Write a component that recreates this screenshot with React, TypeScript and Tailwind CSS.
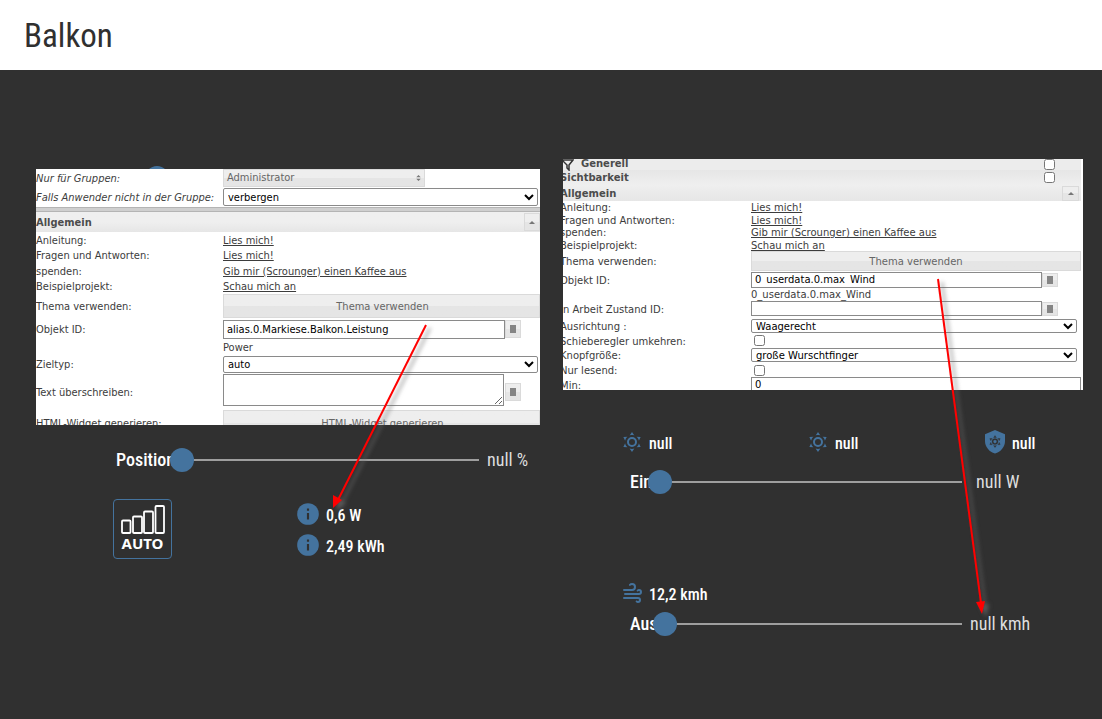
import { ReactNode } from "react"
import clsx from "clsx"

const SUN =
  "M12,7A5,5 0 0,1 17,12A5,5 0 0,1 12,17A5,5 0 0,1 7,12A5,5 0 0,1 12,7M12,9A3,3 0 0,0 9,12A3,3 0 0,0 12,15A3,3 0 0,0 15,12A3,3 0 0,0 12,9M12,2L14.39,5.42C13.65,5.15 12.84,5 12,5C11.16,5 10.35,5.15 9.61,5.42L12,2M3.34,7L7.5,6.65C6.9,7.16 6.36,7.78 5.94,8.5C5.5,9.24 5.25,10 5.11,10.79L3.34,7M3.36,17L5.12,13.23C5.26,14 5.53,14.78 5.95,15.5C6.37,16.24 6.91,16.86 7.5,17.37L3.36,17M20.65,7L18.88,10.79C18.74,10 18.47,9.23 18.05,8.5C17.63,7.78 17.1,7.15 16.5,6.64L20.65,7M20.64,17L16.5,17.36C17.09,16.85 17.62,16.22 18.04,15.5C18.46,14.77 18.73,14 18.87,13.21L20.64,17M12,22L9.59,18.56C10.33,18.83 11.14,19 12,19C12.82,19 13.63,18.83 14.37,18.56L12,22Z"
const WIND =
  "M4,10A1,1 0 0,1 3,9A1,1 0 0,1 4,8H12A2,2 0 0,0 14,6A2,2 0 0,0 12,4C11.45,4 10.95,4.22 10.59,4.59C10.2,5 9.56,5 9.17,4.59C8.78,4.2 8.78,3.56 9.17,3.17C9.9,2.45 10.9,2 12,2A4,4 0 0,1 16,6A4,4 0 0,1 12,10H4M19,12A1,1 0 0,0 20,11A1,1 0 0,0 19,10C18.72,10 18.47,10.11 18.29,10.29C17.9,10.68 17.27,10.68 16.88,10.29C16.5,9.9 16.5,9.27 16.88,8.88C17.42,8.34 18.17,8 19,8A3,3 0 0,1 22,11A3,3 0 0,1 19,14H5A1,1 0 0,1 4,13A1,1 0 0,1 5,12H19M18,18H4A1,1 0 0,1 3,17A1,1 0 0,1 4,16H18A3,3 0 0,1 21,19A3,3 0 0,1 18,22C17.17,22 16.42,21.66 15.88,21.12C15.5,20.73 15.5,20.1 15.88,19.71C16.27,19.32 16.9,19.32 17.29,19.71C17.47,19.89 17.72,20 18,20A1,1 0 0,0 19,19A1,1 0 0,0 18,18Z"

const GREY = "border border-[#dadada] bg-linear-to-b from-[#eeeeee] from-50% to-[#e5e5e5] to-50%"
const FIELD = "border border-[#8a8a8a] bg-white text-black"

const SunIcon = () => (
  <svg viewBox="0 0 24 24" className="size-6 fill-[#44739e]">
    <path d={SUN} />
  </svg>
)

const WindIcon = () => (
  <svg viewBox="0 0 24 24" className="size-6 fill-[#44739e]">
    <path d={WIND} />
  </svg>
)

const ShieldSunIcon = () => (
  <svg viewBox="0 0 24 26" className="h-[26px] w-6">
    <path d="M12 1 2 5.300v6.700c0 5.800 4.200 11 10 12.600 5.800-1.600 10-6.800 10-12.600V5.300z" fill="#44739e" />
    <g transform="translate(4.800 5.400) scale(.6)" fill="#303030" stroke="#303030" strokeWidth=".5">
      <path d={SUN} />
    </g>
  </svg>
)

const InfoIcon = () => (
  <svg viewBox="0 0 24 24" className="size-[26px]">
    <circle cx="12" cy="12" r="10" fill="#44739e" />
    <path d="M11 7h2v2h-2zM11 11h2v6h-2z" fill="#303030" />
  </svg>
)

const Row = ({
  label,
  id,
  height,
  italic,
  children,
}: {
  label?: string
  id?: string
  height: string
  italic?: boolean
  children: ReactNode
}) => (
  <div className={clsx("flex items-center", height)}>
    <label htmlFor={id} className={clsx("w-[187px] shrink-0 pt-0.5 whitespace-nowrap", italic && "italic")}>
      {label}
    </label>
    <div className="flex min-w-0 flex-1 items-center">{children}</div>
  </div>
)

const Links = ({ height }: { height: string }) => {
  const links = [
    ["Anleitung:", "Lies mich!"],
    ["Fragen und Antworten:", "Lies mich!"],
    ["spenden:", "Gib mir (Scrounger) einen Kaffee aus"],
    ["Beispielprojekt:", "Schau mich an"],
  ]
  return (
    <div className={clsx("grid grid-rows-4", height)}>
      {links.map(([label, text]) => (
        <Row key={label} label={label} height="h-auto">
          <a href="#" className="pt-0.5 underline">
            {text}
          </a>
        </Row>
      ))}
    </div>
  )
}

const PickButton = ({ height }: { height: string }) => (
  <button aria-label="Auswählen" className={clsx("flex w-4 shrink-0 items-center justify-center", GREY, height)}>
    <span className="h-2 w-1.5 bg-[#858585]" />
  </button>
)

const CollapseButton = ({ size }: { size: string }) => (
  <button aria-label="Einklappen" className={clsx("flex items-center justify-center", GREY, size)}>
    <svg viewBox="0 0 6 3" className="h-[3px] w-1.5 fill-[#777]">
      <path d="M0 3 3 0l3 3z" />
    </svg>
  </button>
)

const GroupPanel = () => (
  <section className="relative h-64 overflow-hidden bg-white font-['DejaVu_Sans_Condensed','DejaVu_Sans',sans-serif] text-[11px] leading-[14px] text-[#3c3c3c]">
    <Row label="Nur für Gruppen:" id="groups" height="h-[18px]" italic>
      <button id="groups" className={clsx("flex h-[18px] w-[202px] items-center justify-between px-[3px] text-[#666]", GREY)}>
        Administrator
        <svg viewBox="0 0 6 8" className="h-1.5 w-[5px] fill-[#777]">
          <path d="M0 3 3 0l3 3zM0 5h6L3 8z" />
        </svg>
      </button>
    </Row>
    <Row label="Falls Anwender nicht in der Gruppe:" id="hide" height="h-5" italic>
      <select id="hide" className={clsx("mr-0.5 h-[18px] w-full rounded-xs", FIELD)}>
        <option>verbergen</option>
      </select>
    </Row>
    <div className="h-[5px] border-y border-[#b4b4b4] bg-[#cfcfcf]" />
    <div className="flex h-5 items-center justify-between bg-linear-to-b from-[#efefef] from-50% to-[#e6e6e6]">
      <h2 className="pt-0.5 font-bold text-[#4c4c4c]">Allgemein</h2>
      <CollapseButton size="h-[18px] w-4" />
    </div>
    <Links height="h-[62px]" />
    <Row label="Thema verwenden:" id="theme" height="h-6">
      <button id="theme" className={clsx("h-6 w-full pt-0.5 pl-0.5 text-[#666]", GREY)}>
        Thema verwenden
      </button>
    </Row>
    <Row label="Objekt ID:" id="object" height="h-[22px]">
      <input id="object" defaultValue="alias.0.Markiese.Balkon.Leistung" className={clsx("h-[19px] w-[282px] px-[3px]", FIELD)} />
      <PickButton height="h-[18px]" />
    </Row>
    <Row height="h-[15px]">Power</Row>
    <Row label="Zieltyp:" id="target" height="h-[18px]">
      <select id="target" className={clsx("mr-0.5 h-[17px] w-full rounded-xs", FIELD)}>
        <option>auto</option>
      </select>
    </Row>
    <Row label="Text überschreiben:" id="override" height="h-[37px]">
      <textarea id="override" className={clsx("mr-px mb-1 h-8 w-[281px]", FIELD)} />
      <PickButton height="h-[18px]" />
    </Row>
    <Row label="HTML-Widget generieren:" id="html" height="h-[26px]">
      <button id="html" className={clsx("h-[26px] w-full pt-0.5 pl-0.5 text-[#666]", GREY)}>
        HTML-Widget generieren
      </button>
    </Row>
  </section>
)

const WindPanel = () => (
  <section className="flex h-[231px] overflow-hidden bg-white font-['DejaVu_Sans',sans-serif] text-[10px] leading-3 text-[#3c3c3c]">
    <div className="-ml-[3px] min-w-0 flex-1 pr-0.5 [&_label]:w-[191px]">
      <div className="flex h-[11px] items-center bg-[#ececec] font-bold text-[#4c4c4c]">
        <svg viewBox="0 0 12 12" className="h-3 w-3.5 fill-none stroke-[#333] stroke-[1.500]">
          <path d="M1 1h11L8 6v5L6 9V6z" />
        </svg>
        <label htmlFor="general" className="ml-[7px] pb-px">
          Generell
        </label>
        <input id="general" type="checkbox" className="mr-[26px] ml-auto size-[11px] rounded-xs" />
      </div>
      <div className="flex h-[15px] items-center bg-linear-to-b from-[#e6e6e6] to-[#efefef] font-bold text-[#4c4c4c]">
        <label htmlFor="visible">Sichtbarkeit</label>
        <input id="visible" type="checkbox" className="mr-[26px] ml-auto size-[11px] rounded-xs" />
      </div>
      <div className="flex h-4 items-center justify-between bg-linear-to-b from-[#efefef] to-[#e6e6e6] pr-0.5">
        <h2 className="pt-0.5 font-bold text-[#4c4c4c]">Allgemein</h2>
        <CollapseButton size="h-[15px] w-[17px]" />
      </div>
      <Links height="h-[50px]" />
      <Row label="Thema verwenden:" id="theme2" height="h-5">
        <button id="theme2" className={clsx("h-5 w-full pt-0.5 text-[#666]", GREY)}>
          Thema verwenden
        </button>
      </Row>
      <Row label="Objekt ID:" id="object2" height="h-[17px]">
        <input
          id="object2"
          defaultValue="0_userdata.0.max_Wind"
          className={clsx("h-4 w-[291px] px-[3px] leading-[14px]", FIELD)}
        />
        <PickButton height="h-[14px]" />
      </Row>
      <Row height="h-3">
        <span className="pt-px">0_userdata.0.max_Wind</span>
      </Row>
      <Row label="In Arbeit Zustand ID:" id="working" height="h-[17px]">
        <input id="working" className={clsx("h-[15px] w-[291px] px-[3px]", FIELD)} />
        <PickButton height="h-[14px]" />
      </Row>
      <Row label="Ausrichtung :" id="orient" height="h-[17px]">
        <select id="orient" className={clsx("mr-1 h-3.5 w-full rounded-xs", FIELD)}>
          <option>Waagerecht</option>
        </select>
      </Row>
      <Row label="Schieberegler umkehren:" id="invert" height="h-[13px]">
        <input id="invert" type="checkbox" className="ml-[3px] size-[11px]" />
      </Row>
      <Row label="Knopfgröße:" id="knob" height="h-4">
        <select id="knob" className={clsx("mr-1 h-3.5 w-full rounded-xs", FIELD)}>
          <option>große Wurschtfinger</option>
        </select>
      </Row>
      <Row label="Nur lesend:" id="readonly" height="h-[14px]">
        <input id="readonly" type="checkbox" className="ml-[3px] size-[11px]" />
      </Row>
      <Row label="Min:" id="min" height="h-[15px]">
        <input id="min" defaultValue="0" className={clsx("h-[15px] w-full px-[3px]", FIELD)} />
      </Row>
    </div>
  </section>
)

const Slider = ({
  label,
  labelWidth,
  value,
  valueClass,
}: {
  label: string
  labelWidth: string
  value: string
  valueClass: string
}) => (
  <div className="flex h-6 items-center text-lg text-white">
    <label htmlFor={label} className={clsx("shrink-0 whitespace-nowrap font-medium", labelWidth)}>
      {label}
    </label>
    <input
      id={label}
      type="range"
      defaultValue={0}
      className="relative h-6 min-w-0 flex-1 appearance-none bg-transparent [&::-webkit-slider-runnable-track]:h-0.5 [&::-webkit-slider-runnable-track]:bg-[#9e9e9e] [&::-webkit-slider-thumb]:-mt-[11px] [&::-webkit-slider-thumb]:size-6 [&::-webkit-slider-thumb]:appearance-none [&::-webkit-slider-thumb]:rounded-full [&::-webkit-slider-thumb]:bg-[#44739e]"
    />
    <output htmlFor={label} className={clsx("shrink-0 whitespace-nowrap text-[#dedede]", valueClass)}>
      {value}
    </output>
  </div>
)

const Reading = ({ icon, children }: { icon: ReactNode; children: ReactNode }) => (
  <div className="flex h-[26px] items-center gap-[5px] whitespace-nowrap text-base font-medium text-white">
    {icon}
    <span className="pt-[3px]">{children}</span>
  </div>
)

const Arrows = () => (
  <svg className="pointer-events-none absolute top-0 left-0 h-[649px] w-[1102px] drop-shadow-[4px_3px_2px_rgba(110,110,110,0.7)]">
    <g stroke="#f00" strokeWidth="2" fill="#f00">
      <path d="M426 255 338 430" />
      <path d="M333 438v-13l9 5z" stroke="none" />
      <path d="M938 209 981 533" />
      <path d="m982 544-6-12 9-1z" stroke="none" />
    </g>
  </svg>
)

export default function App() {
  return (
    <div className="flex min-h-screen flex-col bg-[#303030] font-['Roboto_Condensed',Roboto,sans-serif]">
      <header className="flex h-[70px] items-center bg-white px-6 pt-0.5">
        <h1 className="text-[33px] text-[#303030]">Balkon</h1>
      </header>
      <main className="relative flex flex-1 gap-[23px] pr-[19px] pl-9">
        <div className="min-w-0 flex-[504] pt-[99px]">
          <div className="relative">
            <span className="absolute -top-[3px] left-[109px] size-6 rounded-full bg-[#44739e]" />
            <GroupPanel />
          </div>
          <div className="mt-[23px] pr-3 pl-20">
            <Slider label="Position" labelWidth="w-[54px]" value="null %" valueClass="w-[49px] pl-2" />
          </div>
          <div className="mt-[27px] flex pl-[77px]">
            <button className="flex h-[60px] w-[59px] flex-col items-center rounded-sm border border-[#44739e] pt-1 text-white">
              <svg viewBox="0 0 44 30" className="h-[30px] w-11 fill-none stroke-white stroke-[1.800]">
                <rect x="1" y="16.500" width="8.500" height="12.500" rx="1" />
                <rect x="12" y="12.500" width="9" height="16.500" rx="1" />
                <rect x="23" y="7.500" width="9" height="21.500" rx="1" />
                <rect x="34.500" y="2" width="8.500" height="27" rx="1" />
              </svg>
              <span className="font-['Noto_Sans',sans-serif] text-[15px] leading-[18px] font-bold">AUTO</span>
            </button>
            <div className="ml-[123px] flex flex-col gap-[5px] pt-0.5">
              <Reading icon={<InfoIcon />}>0,6 W</Reading>
              <Reading icon={<InfoIcon />}>2,49 kWh</Reading>
            </div>
          </div>
        </div>
        <div className="min-w-0 flex-[520] pt-[89px]">
          <WindPanel />
          <div className="mt-[39px] grid grid-cols-[186px_177px_auto] pl-[57px]">
            <Reading icon={<SunIcon />}>null</Reading>
            <Reading icon={<SunIcon />}>null</Reading>
            <Reading icon={<ShieldSunIcon />}>null</Reading>
          </div>
          <div className="mt-[15px] pr-[53px] pl-[67px]">
            <Slider label="Ein" labelWidth="w-[18px]" value="null W" valueClass="w-[68px] pl-[14px]" />
          </div>
          <div className="mt-[86px] pl-[57px]">
            <Reading icon={<WindIcon />}>12,2 kmh</Reading>
          </div>
          <div className="mt-[6px] pr-[53px] pl-[67px]">
            <Slider label="Aus" labelWidth="w-[23px]" value="null kmh" valueClass="w-[68px] pl-2" />
          </div>
        </div>
        <Arrows />
      </main>
    </div>
  )
}
